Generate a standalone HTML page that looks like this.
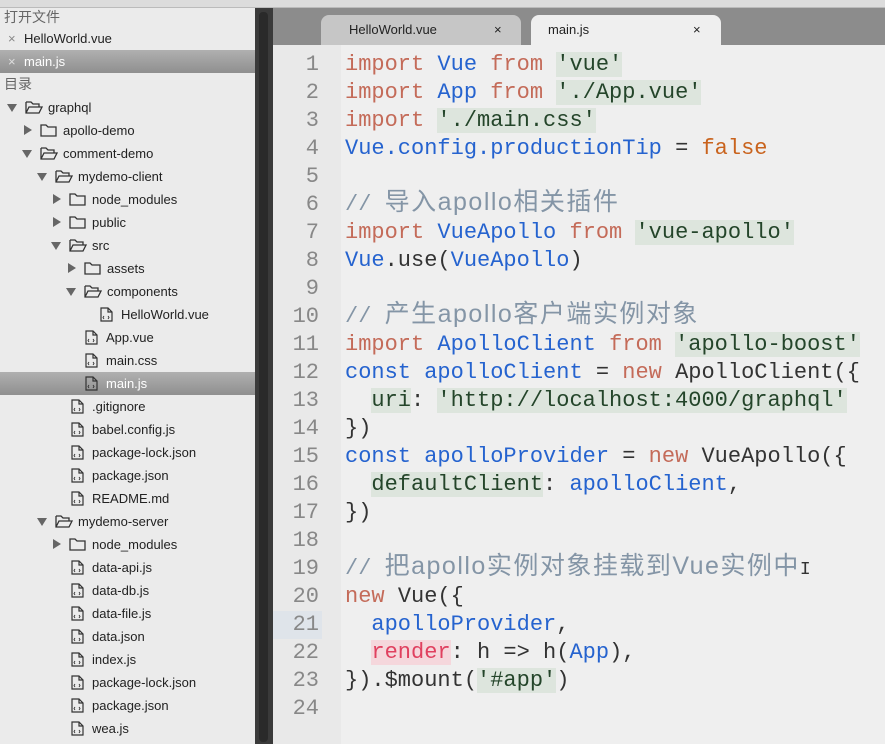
<!DOCTYPE html>
<html><head><meta charset="utf-8"><style>
*{margin:0;padding:0;box-sizing:border-box}
body{width:885px;height:744px;overflow:hidden;background:#efefef;position:relative;font-family:"Liberation Sans","Noto Sans CJK SC",sans-serif}
#top{position:absolute;left:0;top:0;width:885px;height:8px;background:#dcdcdc;border-bottom:1px solid #bbb}
#side{position:absolute;left:0;top:8px;width:255px;height:736px;background:#ebebeb;font-size:13px;color:#222}
.row{position:absolute;left:0;width:255px;height:23px;line-height:23px;white-space:nowrap}
.sel{background:linear-gradient(#b0b0b0,#8f8f8f);color:#fff}
.hdr{color:#666;font-size:14px;left:4px}
.arr{position:absolute;top:8px;width:0;height:0}
.ao{border-left:5px solid transparent;border-right:5px solid transparent;border-top:8px solid #666}
.ac{border-top:5px solid transparent;border-bottom:5px solid transparent;border-left:8px solid #666;top:6px}
.ic{position:absolute;top:4px}
#bar{position:absolute;left:255px;top:8px;width:18px;height:736px;background:#3a3a3a}
#bar:after{content:"";position:absolute;left:4px;top:4px;width:9px;height:730px;background:#2a2a2a;border-radius:4px}
#tabs{position:absolute;left:273px;top:8px;width:612px;height:37px;background:#8c8c8c}
.tab{position:absolute;top:7px;height:30px;border-radius:8px 8px 0 0;font-size:13px;line-height:30px;color:#222}
#gut{position:absolute;left:273px;top:45px;width:68px;height:699px;background:#e9e9e9}
#code{position:absolute;left:273px;top:51px;font-family:"Liberation Mono","Noto Sans CJK SC",monospace;font-size:22px;line-height:28px;white-space:pre}
#code>div{height:28px;overflow:visible}
.ln{display:inline-block;width:46px;text-align:right;color:#888;margin-right:26px}
.k{color:#c46b59}.b{color:#2563cf}.s{background:#dde5dd;color:#24452a}.o{color:#c9631d}.c{color:#8495a6}.d{color:#333}.n{color:#c46b59}
.cj{font-family:"Liberation Sans","Noto Sans CJK SC",sans-serif;font-size:25px;line-height:0;letter-spacing:1.5px}
.hl{background:#dfe4ea;width:49px;margin-right:23px;padding-right:3px}
</style></head><body>
<div id="top"></div>
<div id="side">
<div class="row hdr" style="top:-2px">打开文件</div>
<div class="row" style="top:19px"><span style="position:absolute;left:8px;color:#888">×</span><span style="position:absolute;left:24px">HelloWorld.vue</span></div>
<div class="row sel" style="top:42px"><span style="position:absolute;left:8px;color:#ddd">×</span><span style="position:absolute;left:24px">main.js</span></div>
<div class="row hdr" style="top:65px">目录</div>
<div id="tree"></div>
</div>
<div id="bar"></div>
<div id="tabs">
<div class="tab" style="left:48px;width:200px;background:#c6c6c6"><span style="position:absolute;left:28px">HelloWorld.vue</span><span style="position:absolute;left:173px">×</span></div>
<div class="tab" style="left:258px;width:190px;background:#efefef"><span style="position:absolute;left:17px">main.js</span><span style="position:absolute;left:162px">×</span></div>
</div>
<div id="gut"></div>
<div id="code"><div><span class="ln">1</span><span class="k">import</span> <span class="b">Vue</span> <span class="k">from</span> <span class="s">'vue'</span></div><div><span class="ln">2</span><span class="k">import</span> <span class="b">App</span> <span class="k">from</span> <span class="s">'./App.vue'</span></div><div><span class="ln">3</span><span class="k">import</span> <span class="s">'./main.css'</span></div><div><span class="ln">4</span><span class="b">Vue.config.productionTip</span> <span class="d">=</span> <span class="o">false</span></div><div><span class="ln">5</span></div><div><span class="ln">6</span><span class="c">// <span class="cj">导入apollo相关插件</span></span></div><div><span class="ln">7</span><span class="k">import</span> <span class="b">VueApollo</span> <span class="k">from</span> <span class="s">'vue-apollo'</span></div><div><span class="ln">8</span><span class="b">Vue</span><span class="d">.use(</span><span class="b">VueApollo</span><span class="d">)</span></div><div><span class="ln">9</span></div><div><span class="ln">10</span><span class="c">// <span class="cj">产生apollo客户端实例对象</span></span></div><div><span class="ln">11</span><span class="k">import</span> <span class="b">ApolloClient</span> <span class="k">from</span> <span class="s">'apollo-boost'</span></div><div><span class="ln">12</span><span class="b">const</span> <span class="b">apolloClient</span> <span class="d">=</span> <span class="n">new</span> <span class="d">ApolloClient({</span></div><div><span class="ln">13</span>  <span class="s">uri</span><span class="d">:</span> <span class="s">'http://localhost:4000/graphql'</span></div><div><span class="ln">14</span><span class="d">})</span></div><div><span class="ln">15</span><span class="b">const</span> <span class="b">apolloProvider</span> <span class="d">=</span> <span class="n">new</span> <span class="d">VueApollo({</span></div><div><span class="ln">16</span>  <span class="s">defaultClient</span><span class="d">:</span> <span class="b">apolloClient</span><span class="d">,</span></div><div><span class="ln">17</span><span class="d">})</span></div><div><span class="ln">18</span></div><div><span class="ln">19</span><span class="c">// <span class="cj">把apollo实例对象挂载到Vue实例中</span></span><span class="d" style="font-size:18px;line-height:0">I</span></div><div><span class="ln">20</span><span class="n">new</span> <span class="d">Vue({</span></div><div><span class="ln hl">21</span>  <span class="b">apolloProvider</span><span class="d">,</span></div><div><span class="ln">22</span>  <span style="background:#f5d7dc;color:#e0405f">render</span><span class="d">: h =&gt; h(</span><span class="b">App</span><span class="d">),</span></div><div><span class="ln">23</span><span class="d">}).$mount(</span><span class="s">'#app'</span><span class="d">)</span></div><div><span class="ln">24</span></div></div>
<script>
(function(){
var items=[
[48,'graphql','o'],[63,'apollo-demo','c'],[63,'comment-demo','o'],[78,'mydemo-client','o'],
[92,'node_modules','c'],[92,'public','c'],[92,'src','o'],[107,'assets','c'],[107,'components','o'],
[121,'HelloWorld.vue','f'],[106,'App.vue','f'],[106,'main.css','f'],[106,'main.js','f',1],
[92,'.gitignore','f'],[92,'babel.config.js','f'],[92,'package-lock.json','f'],[92,'package.json','f'],[92,'README.md','f'],
[78,'mydemo-server','o'],[92,'node_modules','c'],[92,'data-api.js','f'],[92,'data-db.js','f'],[92,'data-file.js','f'],
[92,'data.json','f'],[92,'index.js','f'],[92,'package-lock.json','f'],[92,'package.json','f'],[92,'wea.js','f']];
var h='';
items.forEach(function(it,i){
var x=it[0],top=88+i*23;
h+='<div class="row'+(it[3]?' sel':'')+'" style="top:'+top+'px">';
if(it[2]=='o'){h+='<div class="arr ao" style="left:'+(x-41)+'px"></div>';
h+='<svg class="ic" style="left:'+(x-23)+'px" width="18" height="15" viewBox="0 0 18 15"><path d="M1 2h5l2 2h6v3M1 2v11h13l3-6H4l-3 6" fill="none" stroke="#333" stroke-width="1.3"/></svg>';}
else if(it[2]=='c'){h+='<div class="arr ac" style="left:'+(x-39)+'px"></div>';
h+='<svg class="ic" style="left:'+(x-23)+'px" width="17" height="15" viewBox="0 0 17 15"><path d="M1 2h5l2 2h8v9H1z" fill="none" stroke="#333" stroke-width="1.3"/></svg>';}
else{h+='<svg class="ic" style="left:'+(x-21)+'px" width="13" height="15" viewBox="0 0 13 15"><path d="M1 1h7l4 4v9H1zM8 1v4h4" fill="none" stroke="#333" stroke-width="1.2"/><path d="M4 9l-1 1.5 1 1.5M8 9l1 1.5-1 1.5" fill="none" stroke="#333" stroke-width="0.9"/></svg>';}
h+='<span style="position:absolute;left:'+x+'px">'+it[1]+'</span></div>';
});
document.getElementById('tree').innerHTML=h;
})();
</script>
</body></html>
